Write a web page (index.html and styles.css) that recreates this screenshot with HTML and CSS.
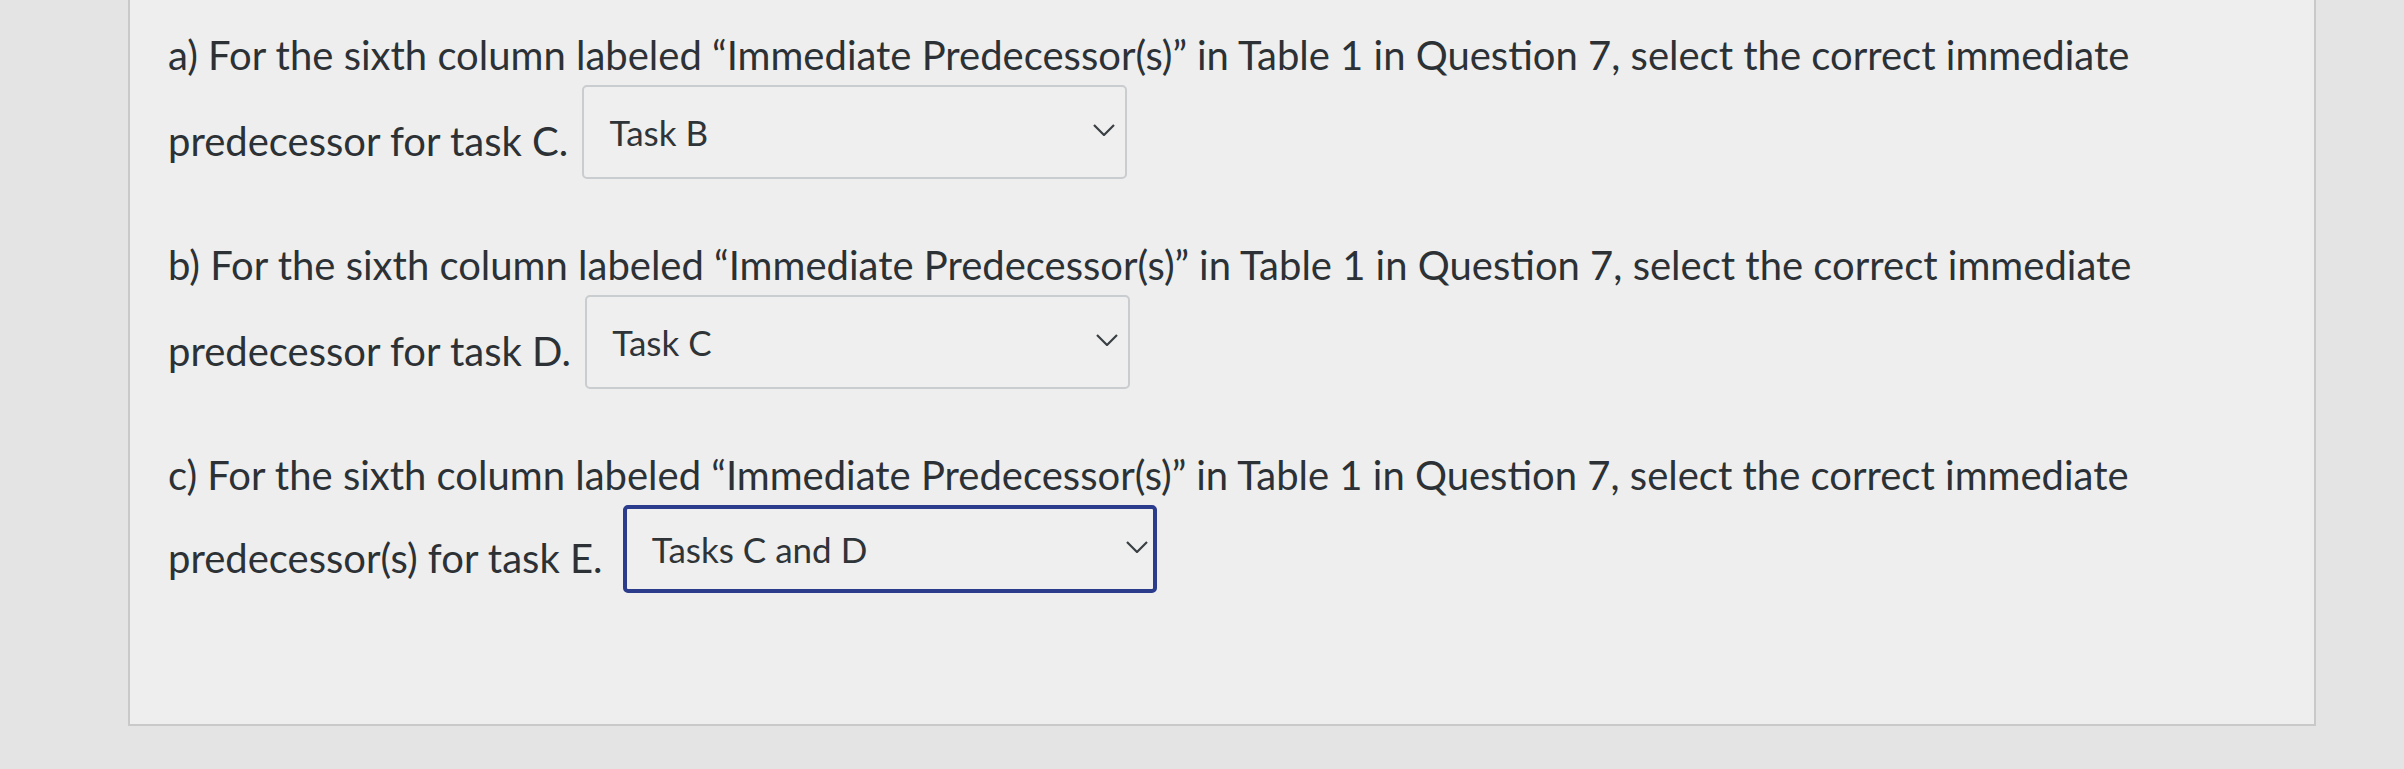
FILE: index.html
```html
<!DOCTYPE html>
<html lang="en">
  <head>
    <meta charset="UTF-8" />
    <meta name="viewport" content="width=device-width, initial-scale=1.0" />
    <title>Question 8</title>
    <link rel="stylesheet" href="styles.css">
  </head>
  <body>
    <div class="panel">
      <!-- a -->
      <div class="question">
        <p class="prompt">a) For the sixth column labeled “Immediate Predecessor(s)” in Table 1 in Question 7, select the correct immediate</p>
        <p class="answer">
          <span class="label">predecessor for task C.</span>
          <span class="select">
            <span class="select-value">Task B</span>
            <svg class="chevron" viewBox="0 0 22 12"><path d="M1 1 L11 11 L21 1" /></svg>
          </span>
        </p>
      </div>

      <!-- b -->
      <div class="question">
        <p class="prompt">b) For the sixth column labeled “Immediate Predecessor(s)” in Table 1 in Question 7, select the correct immediate</p>
        <p class="answer">
          <span class="label">predecessor for task D.</span>
          <span class="select">
            <span class="select-value">Task C</span>
            <svg class="chevron" viewBox="0 0 22 12"><path d="M1 1 L11 11 L21 1" /></svg>
          </span>
        </p>
      </div>

      <!-- c -->
      <div class="question">
        <p class="prompt">c) For the sixth column labeled “Immediate Predecessor(s)” in Table 1 in Question 7, select the correct immediate</p>
        <p class="answer">
          <span class="label">predecessor(s) for task E.</span>
          <span class="select focused">
            <span class="select-value">Tasks C and D</span>
            <svg class="chevron" viewBox="0 0 22 12"><path d="M1 1 L11 11 L21 1" /></svg>
          </span>
        </p>
      </div>
    </div>
  </body>
</html>
```

FILE: styles.css
```css
* {
  box-sizing: border-box;
}

body {
  margin: 0;
  font-family: Lato, "Open Sans", Arial, sans-serif;
  background: #e3e4e3;
  color: #2c3136;
  min-height: 100vh;
}

.panel {
  margin-left: 128px;
  width: 2188px;
  background: #edeeed;
  border: 2px solid #c8c9c8;
  border-top: none;
  padding: 25px 80px 131px 38px;
}

.question {
  margin-bottom: 56px;
  font-size: 40px;
  line-height: 60px;
}

.question:last-child {
  margin-bottom: 0;
}

.prompt,
.answer {
  margin: 0;
}

.select {
  display: inline-flex;
  align-items: center;
  justify-content: space-between;
  vertical-align: 10px;
  width: 545px;
  height: 94px;
  margin-left: 4px;
  padding: 0 10px 0 25px;
  background: #eeefee;
  border: 2px solid #c9cdcf;
  border-radius: 5px;
  line-height: normal;
}

.select-value {
  font-size: 35px;
  color: #2f3439;
}

.chevron {
  width: 22px;
  height: 12px;
  margin-top: -4px;
}

.chevron path {
  fill: none;
  stroke: #3a3f44;
  stroke-width: 2.2;
}

.select.focused {
  width: 534px;
  height: 88px;
  margin-left: 10px;
  padding-right: 5px;
  border: 4px solid #2b3c8c;
}
```
